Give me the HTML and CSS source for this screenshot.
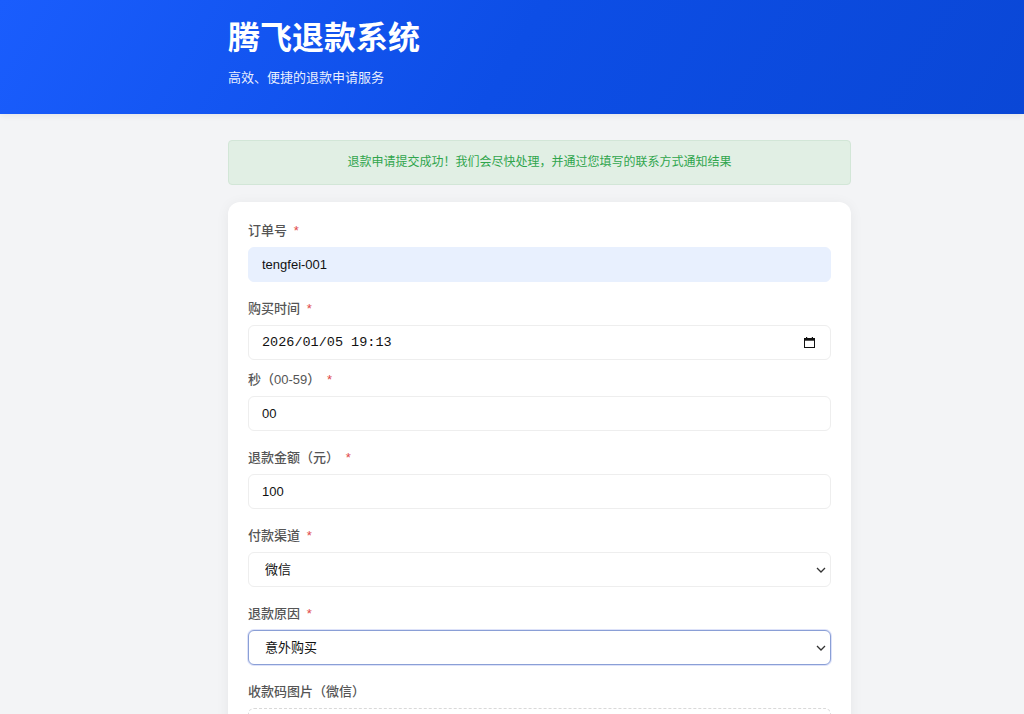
FILE: index.html
```html
<!DOCTYPE html>
<html lang="zh-CN">
<head>
<meta charset="UTF-8">
<meta name="viewport" content="width=device-width, initial-scale=1.0">
<title>腾飞退款系统</title>
<link rel="stylesheet" href="styles.css">
</head>
<body>
<div class="header">
    <div class="container">
        <h1>腾飞退款系统</h1>
        <p class="subtitle">高效、便捷的退款申请服务</p>
    </div>
</div>

<div class="container main">
    <div class="alert-success">退款申请提交成功！我们会尽快处理，并通过您填写的联系方式通知结果</div>

    <form class="card">
        <div class="form-group">
            <label for="order_no">订单号 <span class="req">*</span></label>
            <input type="text" id="order_no" class="autofilled" value="tengfei-001">
        </div>
        <div class="form-group form-group-tight">
            <label for="buy_time">购买时间 <span class="req">*</span></label>
            <div class="field">
                <input type="text" id="buy_time" class="mono" value="2026/01/05 19:13">
                <svg class="field-icon cal" width="11" height="11" viewBox="0 0 11 11">
                    <rect x="0.5" y="1.5" width="10" height="9" fill="none" stroke="#111" stroke-width="1"/>
                    <rect x="0.5" y="1.5" width="10" height="2.2" fill="#111"/>
                    <rect x="2" y="0" width="1.2" height="2" fill="#111"/>
                    <rect x="7.8" y="0" width="1.2" height="2" fill="#111"/>
                </svg>
            </div>
        </div>
        <div class="form-group">
            <label for="seconds">秒（00-59） <span class="req">*</span></label>
            <input type="text" id="seconds" value="00">
        </div>
        <div class="form-group">
            <label for="amount">退款金额（元） <span class="req">*</span></label>
            <input type="text" id="amount" value="100">
        </div>
        <div class="form-group">
            <label for="channel">付款渠道 <span class="req">*</span></label>
            <div class="field">
                <select id="channel">
                    <option>微信</option>
                    <option>支付宝</option>
                </select>
                <svg class="field-icon chevron" width="10" height="6" viewBox="0 0 10 6">
                    <path d="M1 1 L5 5 L9 1" fill="none" stroke="#333" stroke-width="1.3"/>
                </svg>
            </div>
        </div>
        <div class="form-group">
            <label for="reason">退款原因 <span class="req">*</span></label>
            <div class="field">
                <select id="reason" class="focused">
                    <option>意外购买</option>
                    <option>商品问题</option>
                    <option>其他</option>
                </select>
                <svg class="field-icon chevron" width="10" height="6" viewBox="0 0 10 6">
                    <path d="M1 1 L5 5 L9 1" fill="none" stroke="#333" stroke-width="1.3"/>
                </svg>
            </div>
        </div>
        <div class="form-group">
            <label>收款码图片（微信）</label>
            <div class="upload-box"></div>
        </div>
    </form>
</div>
</body>
</html>
```

FILE: styles.css
```css
body {
    font-family: "Liberation Sans", "Noto Sans CJK SC", sans-serif;
    margin: 0;
    padding: 0;
    background-color: #f3f4f6;
    color: #222;
}
.container {
    width: 623px;
    margin-left: 228px;
}
.header {
    height: 114px;
    box-sizing: border-box;
    padding-top: 18px;
    background: linear-gradient(120deg, #1a5dfd 0%, #0d4ee6 50%, #0a47d6 100%);
    color: #fff;
    box-shadow: 0 2px 6px rgba(0, 0, 0, 0.06);
}
.header h1 {
    margin: 0;
    font-size: 32px;
    line-height: 40px;
    font-weight: bold;
}
.subtitle {
    margin: 10px 0 0;
    font-size: 13px;
    line-height: 20px;
    color: rgba(255, 255, 255, 0.92);
}
.main {
    padding-top: 26px;
}
.alert-success {
    height: 45px;
    box-sizing: border-box;
    line-height: 43px;
    text-align: center;
    font-size: 12px;
    color: #2fa54c;
    background-color: #e1efe4;
    border: 1px solid #d2e6d7;
    border-radius: 4px;
}
.card {
    margin-top: 17px;
    padding: 20px 20px 40px;
    background-color: #fff;
    border-radius: 12px;
    box-shadow: 0 2px 14px rgba(0, 0, 0, 0.06);
}
.form-group {
    margin-bottom: 18px;
}
.form-group-tight {
    margin-bottom: 11px;
}
label {
    display: block;
    font-size: 13px;
    line-height: 18px;
    font-weight: 500;
    color: #555;
    margin-bottom: 7px;
}
.req {
    color: #e04848;
    margin-left: 3px;
}
.field {
    position: relative;
}
input[type="text"], select {
    display: block;
    width: 100%;
    height: 35px;
    box-sizing: border-box;
    padding: 0 13px;
    font-family: inherit;
    font-size: 13px;
    color: #111;
    background-color: #fff;
    border: 1px solid #eeeeee;
    border-radius: 6px;
    outline: none;
    appearance: none;
}
select {
    padding-left: 16px;
}
input.autofilled {
    background-color: #e8f0fe;
    border-color: #e8f0fe;
}
input.mono {
    font-family: "Liberation Mono", monospace;
    font-size: 13.5px;
}
select.focused {
    border-color: #8a9fd6;
    box-shadow: 0 0 0 1px rgba(120, 140, 230, 0.25);
}
.field-icon {
    position: absolute;
    top: 50%;
    pointer-events: none;
}
.cal {
    right: 16px;
    margin-top: -6px;
}
.chevron {
    right: 5px;
    margin-top: -3px;
}
.upload-box {
    height: 90px;
    border: 1px dashed #d9d9d9;
    border-radius: 6px;
}
```
